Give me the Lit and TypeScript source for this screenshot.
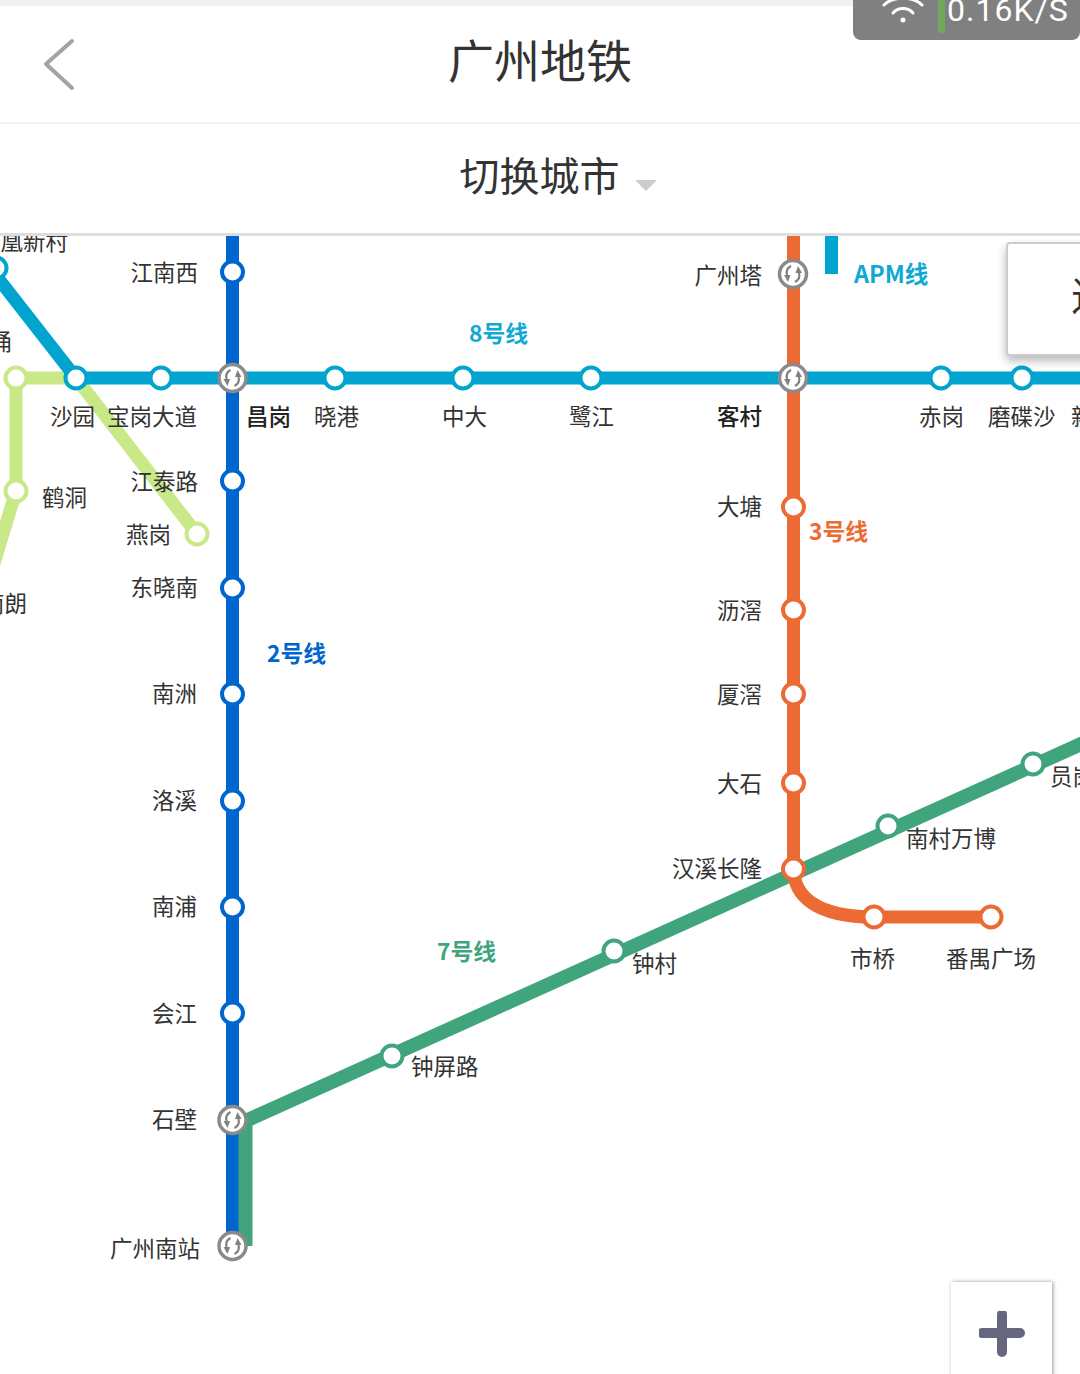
import { LitElement, html, css, svg } from 'lit';
import { customElement } from 'lit/decorators.js';

type Stop = [number, number];
// text, x, baseline, anchor
type Label = [string, number, number, ('start' | 'end')?];

const CYAN = '#00a4ce';
const BLUE = '#0066cf';
const ORANGE = '#ec6a33';
const GREEN = '#40a57d';
const LIME = '#c9e888';

const routes = [
  { color: LIME, w: 13, d: 'M-8 570L16 491V378H76L197 534' },
  { color: CYAN, w: 13, d: 'M-10 268L76 378H1090' },
  { color: BLUE, w: 13, d: 'M232.5 230V1246' },
  { color: GREEN, w: 14, d: 'M245.5 1246V1121L1090 740' },
  { color: ORANGE, w: 13, d: 'M793.5 230V868C793.5 896 816 917 874 917H991' },
  { color: CYAN, w: 13, d: 'M831.500 230V274' },
];

const stops: { color: string; at: Stop[] }[] = [
  { color: LIME, at: [[16, 378], [16, 491], [197, 534]] },
  { color: CYAN, at: [[-4, 268], [76, 378], [161, 378], [335, 378], [463, 378], [591, 378], [941, 378], [1022, 378]] },
  { color: BLUE, at: [[232.5, 272], [232.5, 481], [232.5, 588], [232.5, 694], [232.5, 801], [232.5, 907], [232.5, 1013]] },
  { color: GREEN, at: [[392, 1056], [614, 951], [888, 826], [1033, 764]] },
  { color: ORANGE, at: [[793.5, 507], [793.5, 610], [793.5, 694], [793.5, 783], [793.5, 869], [874, 917], [991, 917]] },
];

const hubs: Stop[] = [[232.5, 378], [793, 378], [793, 274], [232.5, 1120], [232.5, 1246]];

const names: Label[] = [
  ['凰新村', 68, 250, 'end'], ['涌', 12, 350, 'end'], ['南朗', 27, 612, 'end'],
  ['江南西', 198, 281, 'end'], ['沙园', 95, 425, 'end'], ['宝岗大道', 197, 425, 'end'],
  ['晓港', 314, 425], ['中大', 442, 425], ['鹭江', 569, 425],
  ['赤岗', 919, 425], ['磨碟沙', 988, 425], ['新', 1071, 425],
  ['广州塔', 762, 284, 'end'], ['江泰路', 198, 490, 'end'], ['鹤洞', 42, 506], ['燕岗', 171, 543, 'end'],
  ['东晓南', 198, 596, 'end'], ['南洲', 197, 702, 'end'], ['洛溪', 197, 809, 'end'], ['南浦', 197, 915, 'end'],
  ['会江', 197, 1022, 'end'], ['石壁', 197, 1128, 'end'], ['广州南站', 200, 1257, 'end'],
  ['大塘', 762, 515, 'end'], ['沥滘', 762, 619, 'end'], ['厦滘', 762, 703, 'end'], ['大石', 762, 792, 'end'],
  ['汉溪长隆', 762, 877, 'end'], ['南村万博', 906, 847], ['员岗', 1050, 785], ['市桥', 850, 967],
  ['番禺广场', 946, 967], ['钟村', 632, 972], ['钟屏路', 411, 1075],
];

// the two transfer stations the map sets darker
const strongNames: Label[] = [['昌岗', 246, 425], ['客村', 762, 425, 'end']];

const lineNames: { text: string; x: number; y: number; color: string; size: number }[] = [
  { text: 'APM线', x: 854, y: 283, color: '#10a9d3', size: 23.5 },
  { text: '8号线', x: 469, y: 342, color: '#10a9d3', size: 22.8 },
  { text: '3号线', x: 809, y: 540, color: ORANGE, size: 22.8 },
  { text: '2号线', x: 267, y: 662, color: BLUE, size: 22.8 },
  { text: '7号线', x: 437, y: 960, color: GREEN, size: 22.8 },
];

@customElement('app-root')
export default class AppRoot extends LitElement {
  static styles = css`
    :host {
      display: block;
      position: relative;
      width: 1080px;
      height: 1374px;
      overflow: hidden;
      background: #fff;
      font-family: 'Noto Sans CJK SC', 'Noto Sans', sans-serif;
      color: #333;
    }

    .strip {
      height: 6px;
      background: #f0f0f0;
    }

    .header {
      display: flex;
      align-items: center;
      justify-content: center;
      position: relative;
      height: 104px;
      padding-bottom: 12px;
      border-bottom: 2px solid #f2f2f2;
      font-size: 46px;
    }

    .back {
      position: absolute;
      left: 40px;
      top: 28px;
      width: 40px;
      height: 60px;
    }

    .switcher {
      display: flex;
      align-items: center;
      justify-content: center;
      height: 99px;
      padding: 0 0 10px 36px;
      border-bottom: 3px solid #ddd;
      font-size: 40px;
    }

    .caret {
      width: 0;
      height: 0;
      margin: 24px 0 0 15px;
      border-left: 11px solid transparent;
      border-right: 11px solid transparent;
      border-top: 11px solid #ccc;
    }

    .map {
      position: relative;
      height: 1138px;
      overflow: hidden;
    }

    .map svg {
      display: block;
    }

    .station {
      font-size: 22.5px;
      fill: #333;
    }

    .station.strong {
      font-weight: 500;
      fill: #222;
    }

    .line-name {
      font-weight: 700;
    }

    .float-box {
      position: absolute;
      left: 1006px;
      top: 242px;
      width: 90px;
      height: 114px;
      box-sizing: border-box;
      background: #fff;
      border: 2px solid #ccc;
      border-radius: 4px;
      box-shadow: 0 5px 10px rgba(0, 0, 0, 0.28);
      font-size: 40px;
      line-height: 100px;
      padding-left: 63px;
      white-space: nowrap;
    }

    .zoom {
      position: absolute;
      left: 951px;
      top: 1282px;
      width: 101px;
      height: 110px;
      background: #fff;
      box-shadow: 1px 0 4px rgba(0, 0, 0, 0.4);
    }

    .zoom svg {
      display: block;
      margin: 29px 0 0 28px;
    }

    .speed {
      position: absolute;
      left: 853px;
      top: 0;
      width: 227px;
      height: 40px;
      overflow: hidden;
      background: #808080;
      border-radius: 0 0 8px 8px;
      color: #fff;
    }

    .speed svg {
      position: absolute;
      left: 26px;
      top: -10px;
    }

    .speed .signal {
      position: absolute;
      left: 85px;
      top: 0;
      width: 7px;
      height: 33px;
      background: #74a55c;
      border-radius: 0 0 3px 3px;
    }

    .speed .rate {
      position: absolute;
      left: 94px;
      top: -8px;
      font-family: Roboto, sans-serif;
      font-size: 32px;
      line-height: 36px;
      letter-spacing: 1px;
      white-space: nowrap;
    }
  `;

  private renderHub([x, y]: Stop) {
    return svg`
      <g transform="translate(${x} ${y})">
        <circle r="13.500" fill="#fff" stroke="#8a8a8a" stroke-width="3.500"></circle>
        <g fill="none" stroke="#808080" stroke-width="2.200">
          <path d="M-2 -8C-6 -6 -7 -3 -6 1"></path>
          <path d="M2 8C6 6 7 3 6 -1"></path>
        </g>
        <path d="M-9 1L-2.500 1L-5 8Z M9 -1L2.500 -1L5 -8Z" fill="#808080"></path>
      </g>
    `;
  }

  render() {
    return html`
      <div class="strip"></div>
      <div class="header">
        <svg class="back" viewBox="0 0 40 60">
          <path d="M32 7L6 30L32 54" fill="none" stroke="#a3a3a3" stroke-width="4" stroke-linecap="round" stroke-linejoin="round"></path>
        </svg>
        广州地铁
      </div>
      <div class="switcher">切换城市<span class="caret"></span></div>
      <div class="map">
        <svg width="1080" height="1138" viewBox="0 236 1080 1138">
          ${routes.map(r => svg`<path d=${r.d} fill="none" stroke=${r.color} stroke-width=${r.w}></path>`)}
          ${stops.map(s => s.at.map(([x, y]) => svg`<circle cx=${x} cy=${y} r="10.500" fill="#fff" stroke=${s.color} stroke-width="4"></circle>`))}
          ${hubs.map(h => this.renderHub(h))}
          ${names.map(([t, x, y, a]) => svg`<text class="station" x=${x} y=${y} text-anchor=${a ?? 'start'}>${t}</text>`)}
          ${strongNames.map(([t, x, y, a]) => svg`<text class="station strong" x=${x} y=${y} text-anchor=${a ?? 'start'}>${t}</text>`)}
          ${lineNames.map(l => svg`<text class="line-name" x=${l.x} y=${l.y} fill=${l.color} font-size=${l.size}>${l.text}</text>`)}
        </svg>
      </div>
      <div class="float-box">进入</div>
      <div class="zoom">
        <svg width="46" height="46" viewBox="0 0 46 46">
          <path d="M23 3V41M3 22H41" stroke="#66667f" stroke-width="10" stroke-linecap="round"></path>
        </svg>
      </div>
      <div class="speed">
        <svg width="48" height="36" viewBox="0 0 48 36" fill="none" stroke="#fff" stroke-width="3" stroke-linecap="round">
          <path d="M5 15C14 6 34 6 43 15"></path>
          <path d="M14 23C19 17 29 17 34 23"></path>
          <circle cx="24" cy="30" r="2.500" fill="#fff" stroke="none"></circle>
        </svg>
        <span class="signal"></span>
        <span class="rate">0.16K/S</span>
      </div>
    `;
  }
}
